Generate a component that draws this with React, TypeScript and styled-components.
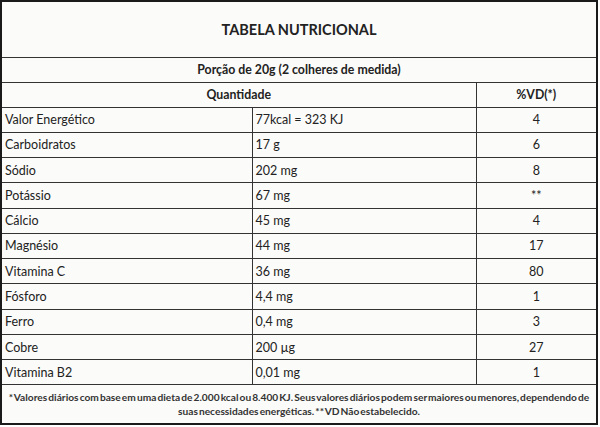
import styled, { createGlobalStyle } from "styled-components";

const GlobalStyle = createGlobalStyle`
  html, body {
    margin: 0;
    padding: 0;
    background: #ffffff;
  }
  body {
    font-family: Lato, "Open Sans", sans-serif;
    color: #222;
  }
`;

const Frame = styled.div`
  width: 600px;
  height: 427px;
  background: #ffffff;
`;

const Table = styled.table`
  width: 598px;
  border-collapse: collapse;
  table-layout: fixed;
  background: #fbfbf9;
  border: 2px solid #1a1a1a;
  font-size: 12.5px;
`;

const Row = styled.tr<{ $h: number }>`
  height: ${(p) => p.$h}px;
`;

const TitleCell = styled.th`
  padding: 0;
  font-size: 14.5px;
  font-weight: 700;
  text-align: center;
  border-bottom: 1px solid #333;
`;

const HeadCell = styled.th`
  padding: 0;
  font-size: 12.3px;
  font-weight: 700;
  text-align: center;
  border: 1px solid #333;
`;

const Cell = styled.td<{ $center?: boolean }>`
  padding: 0 3px;
  border: 1px solid #333;
  text-align: ${(p) => (p.$center ? "center" : "left")};
  white-space: nowrap;
`;

const Note = styled.td`
  padding: 0 2px;
  font-size: 10.2px;
  font-weight: 700;
  line-height: 14px;
  word-spacing: -1.4px;
  text-align: center;
  color: #333;
  border-top: 1px solid #333;
`;

const rows: [string, string, string][] = [
  ["Valor Energético", "77kcal = 323 KJ", "4"],
  ["Carboidratos", "17 g", "6"],
  ["Sódio", "202 mg", "8"],
  ["Potássio", "67 mg", "**"],
  ["Cálcio", "45 mg", "4"],
  ["Magnésio", "44 mg", "17"],
  ["Vitamina C", "36 mg", "80"],
  ["Fósforo", "4,4 mg", "1"],
  ["Ferro", "0,4 mg", "3"],
  ["Cobre", "200 µg", "27"],
  ["Vitamina B2", "0,01 mg", "1"],
];

export default function App() {
  return (
    <Frame>
      <GlobalStyle />
      <Table>
        <colgroup>
          <col style={{ width: 251 }} />
          <col style={{ width: 224 }} />
          <col />
        </colgroup>
        <thead>
          <Row $h={56}>
            <TitleCell colSpan={3}>TABELA NUTRICIONAL</TitleCell>
          </Row>
          <Row $h={25}>
            <HeadCell colSpan={3}>Porção de 20g (2 colheres de medida)</HeadCell>
          </Row>
          <Row $h={25}>
            <HeadCell colSpan={2}>Quantidade</HeadCell>
            <HeadCell>%VD(*)</HeadCell>
          </Row>
        </thead>
        <tbody>
          {rows.map(([name, amount, vd]) => (
            <Row $h={25.27} key={name}>
              <Cell>{name}</Cell>
              <Cell>{amount}</Cell>
              <Cell $center>{vd}</Cell>
            </Row>
          ))}
          <Row $h={39}>
            <Note colSpan={3}>
              * Valores diários com base em uma dieta de 2.000 kcal ou 8.400 KJ. Seus valores
              diários podem ser maiores ou menores, dependendo de suas necessidades energéticas.
              ** VD Não estabelecido.
            </Note>
          </Row>
        </tbody>
      </Table>
    </Frame>
  );
}
